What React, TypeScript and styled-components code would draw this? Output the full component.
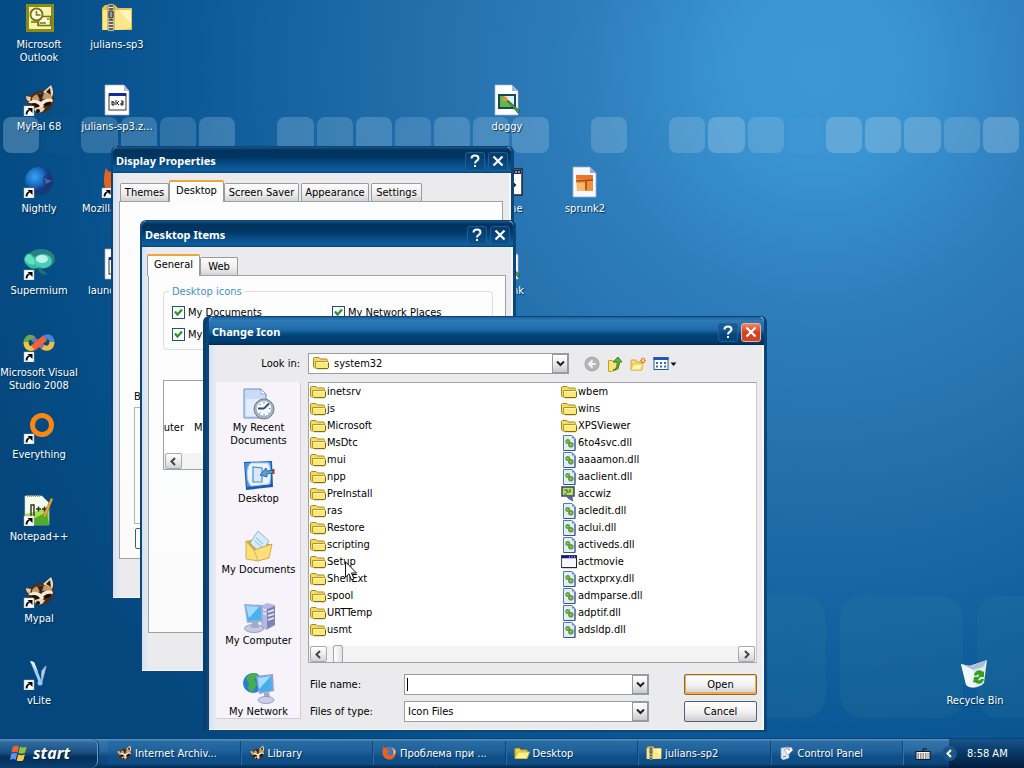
import React from 'react';
import styled, { createGlobalStyle, css } from 'styled-components';

const GlobalStyle = createGlobalStyle`
  * { box-sizing: border-box; }
  body { margin: 0; background: #05477c; }
  body, button, input, select {
    font-family: 'DejaVu Sans Condensed', 'Noto Sans', 'Liberation Sans', sans-serif;
    font-size: 11px;
    line-height: 13px;
    color: #000;
  }
  svg { display: block; flex: none; }
`;

/* ---------- screen and wallpaper ---------- */

const Screen = styled.div`
  position: relative;
  display: flex;
  flex-direction: column;
  min-height: 100vh;
  overflow: hidden;
  background: radial-gradient(ellipse 88% 120% at 80% 9%, #3c97d5 0%, #3a94d2 10%, #2f7fbd 25%, #2470ad 43%, #1664a2 58%, #0b5896 72%, #054c84 90%, #05477d 100%);
`;

const Wallpaper = styled.div`
  position: absolute;
  inset: 0;
  display: flex;
  flex-direction: column;
  justify-content: space-between;
  padding: 117px 0 50px;
`;

const SmallTiles = styled.div`
  display: grid;
  grid-template-columns: repeat(26, 1fr);
  gap: 3px;
  padding: 0 5px 0 3px;
`;

const SmallTile = styled.span<{ $tone: number }>`
  height: 36px;
  border-radius: 8px;
  background: rgba(160, 200, 225, ${(p) => p.$tone / 100});
`;

const BigTiles = styled.div`
  display: flex;
  justify-content: flex-end;
  gap: 14px;
  margin-right: -76px;
`;

const BigTile = styled.span`
  width: 123px;
  height: 122px;
  border-radius: 22px;
  background: rgba(60, 140, 150, 0.14);
`;

const tileTones = [34, 2, 27, 30, 24, 30, 0, 30, 26, 30, 24, 30, 28, 30, 0, 30, 0, 28, 38, 26, 4, 38, 38, 36, 26, 36];

const Desktop = styled.main`
  position: relative;
  flex: 1;
`;

const IconGrid = styled.div`
  position: relative;
  display: grid;
  grid-template-columns: repeat(13, 78px);
  grid-template-rows: repeat(9, 82px);
`;

const Shortcut = styled.a<{ $col: number; $row: number }>`
  grid-column: ${(p) => p.$col};
  grid-row: ${(p) => p.$row};
  display: flex;
  flex-direction: column;
  align-items: center;
  gap: 4px;
  padding-top: 2px;
  color: #fff;
  text-align: center;
  text-decoration: none;
  text-shadow: 1px 1px 1px #022a4c;
`;

/* ---------- windows ---------- */

const Window = styled.section<{ $x: number; $y: number; $w: number; $active?: boolean }>`
  position: absolute;
  left: ${(p) => p.$x}px;
  top: ${(p) => p.$y}px;
  width: ${(p) => p.$w}px;
  border: solid #0b457a;
  border-width: 1px 3px 2px 2px;
  border-radius: 6px 6px 0 0;
  background: #ebebed;
  ${(p) => p.$active && css`
    border-width: 1px 3px 2px 3px;
    box-shadow: -3px 0 0 #07406f;
  `}
`;

const TitleBar = styled.header<{ $active?: boolean }>`
  display: flex;
  align-items: center;
  gap: 3px;
  height: ${(p) => (p.$active ? 28 : 26)}px;
  padding: 2px 3px 0 3px;
  border-radius: 5px 5px 0 0;
  background: ${(p) => (p.$active
    ? 'linear-gradient(#1c5f9b, #2f7ab6 12%, #1f6ba8 45%, #004479 65%, #003a68 92%, #002a50)'
    : 'linear-gradient(#1a5488, #02335c 12%, #003764 40%, #08508c 70%, #0d5f9d 90%, #064679)')};
  color: #fff;
`;

const TitleText = styled.h2`
  flex: 1;
  margin: 0;
  font: bold 11px/14px 'Noto Sans', 'Open Sans', sans-serif;
`;

const CaptionButton = styled.button<{ $danger?: boolean }>`
  display: grid;
  place-items: center;
  width: 20px;
  height: 19px;
  padding: 0;
  border: 1px solid ${(p) => (p.$danger ? '#f0b09c' : '#1f5f97')};
  border-radius: 3px;
  background: ${(p) => (p.$danger ? 'linear-gradient(#ee8468, #d8401c 50%, #c8482c)' : 'rgba(10, 70, 125, 0.5)')};
`;

const Body = styled.div<{ $pad: string }>`
  padding: ${(p) => p.$pad};
  background: linear-gradient(90deg, #d3e2f5, #ebebed 7px);
  box-shadow: inset -2px 0 0 #f4f8fd, inset 0 -1px 0 #f4f8fd;
`;

const Tabs = styled.div`
  display: flex;
  align-items: flex-end;
  height: 21px;
`;

const Tab = styled.button<{ $w: number; $on?: boolean }>`
  width: ${(p) => p.$w}px;
  height: 18px;
  margin: 0 1px;
  padding: 0;
  border: 1px solid #9a9a9c;
  border-bottom-width: 0;
  border-radius: 2px 2px 0 0;
  background: linear-gradient(#fdfdfd, #ececec 60%, #d4d4d6);
  white-space: nowrap;
  ${(p) => p.$on && css`
    position: relative;
    height: 22px;
    margin: 0 -1px -1px;
    padding-bottom: 4px;
    border-top: 2px solid #f0a53a;
    border-bottom: 0;
    background: #fcfcfd;
  `}
`;

const Pane = styled.div<{ $h: number; $pad: string }>`
  height: ${(p) => p.$h}px;
  padding: ${(p) => p.$pad};
  border: 1px solid #9fa0a3;
  background: linear-gradient(#fdfdfe, #fafbfa);
  overflow: hidden;
`;

const BackgroundList = styled.div`
  height: 117px;
  margin-top: 4px;
  border: 1px solid #a9b4b4;
`;

const PlainButton = styled.button`
  display: block;
  width: 150px;
  height: 21px;
  margin: 4px 0 0 1px;
  border: 1px solid #3e5f6c;
  border-radius: 2px;
  background: #fff;
`;

const Group = styled.fieldset`
  display: grid;
  grid-template-columns: 160px 1fr;
  grid-auto-rows: 14px;
  align-content: start;
  gap: 8px 0;
  height: 66px;
  margin: 0;
  padding: 6px 8px 0;
  border: 1px solid #dcdcde;
  border-radius: 4px;
  legend { padding: 0 3px; margin-left: -3px; color: #4590c4; line-height: 15px; }
`;

const Check = styled.label`
  display: flex;
  align-items: center;
  gap: 3px;
  height: 14px;
  white-space: nowrap;
  input {
    appearance: none;
    width: 13px;
    height: 13px;
    margin: 0;
    border: 1px solid #1c5180;
    background: #fbfbf8;
  }
`;

const CheckBoxWrap = styled.span`
  position: relative;
  display: flex;
  svg { position: absolute; left: 2px; top: 2px; pointer-events: none; }
`;

const IconStrip = styled.div`
  display: flex;
  flex-direction: column;
  justify-content: flex-end;
  height: 90px;
  margin-top: 30px;
  border: 1px solid #9fa0a3;
  background: #fff;
  overflow: hidden;
`;

const StripLabels = styled.div`
  display: flex;
  justify-content: flex-start;
  gap: 10px;
  padding-bottom: 19px;
  white-space: nowrap;
  span:first-child { width: 20px; display: flex; justify-content: flex-end; }
`;

const ScrollTrack = styled.div`
  display: flex;
  align-items: center;
  height: 16px;
  padding: 0 1px;
  background: #f3f3f4;
`;

const ScrollArrow = styled.button`
  display: grid;
  place-items: center;
  width: 17px;
  height: 16px;
  padding: 0;
  border: 1px solid #a9a9ac;
  border-radius: 2px;
  background: linear-gradient(#fff, #e8e8ea 60%, #d2d2d5);
`;

const ScrollThumb = styled.span`
  flex: 1;
  &::before {
    content: '';
    display: block;
    width: 8px;
    height: 16px;
    margin-left: 6px;
    border: 1px solid #a4a4a8;
    border-radius: 2px;
    background: linear-gradient(90deg, #fff, #e2e2e4);
  }
`;

/* ---------- file dialog ---------- */

const Toolbar = styled.div`
  display: flex;
  align-items: center;
  height: 21px;
  margin-bottom: 8px;
`;

const LookInLabel = styled.label`
  width: 92px;
  padding-right: 8px;
  text-align: right;
`;

const ToolButtons = styled.div`
  display: flex;
  gap: 7px;
  margin-left: 15px;
`;

const ToolButton = styled.button`
  display: block;
  padding: 0;
  border: 0;
  background: none;
`;

const ComboBox = styled.span<{ $w?: number; $indent?: number }>`
  position: relative;
  display: flex;
  width: ${(p) => (p.$w ? `${p.$w}px` : '100%')};
  height: 21px;
  select, input {
    appearance: none;
    width: 100%;
    height: 21px;
    padding: 0 20px 0 ${(p) => p.$indent ?? 3}px;
    border: 1px solid #9b9ca0;
    border-radius: 0;
    outline: 0;
    background: #fff;
  }
`;

const ComboIcon = styled.span`
  position: absolute;
  left: 5px;
  top: 2px;
  pointer-events: none;
`;

const ComboArrow = styled.button`
  position: absolute;
  right: 1px;
  top: 1px;
  display: grid;
  place-items: center;
  width: 16px;
  height: 19px;
  padding: 0;
  border: 1px solid #98999c;
  background: linear-gradient(#fff, #ececee 50%, #c9cacd);
  pointer-events: none;
`;

const Caret = styled.span`
  position: absolute;
  left: 3px;
  top: 4px;
  width: 1px;
  height: 13px;
  background: #000;
`;

const DialogMain = styled.div`
  display: flex;
  align-items: flex-start;
  gap: 7px;
`;

const Places = styled.nav`
  display: flex;
  flex-direction: column;
  width: 85px;
  padding: 5px 0 0;
  border: 1px solid #e0dfe5;
  border-color: #f6f4fa #cfced6 #cfced6 #f6f4fa;
  background: #f6f4fa;
`;

const Place = styled.a`
  display: flex;
  flex-direction: column;
  align-items: center;
  gap: 1px;
  height: 71px;
  color: #000;
  text-align: center;
  text-decoration: none;
  white-space: pre-line;
  &:last-child { height: 46px; }
`;

const DialogRight = styled.div`
  flex: 1;
  display: flex;
  flex-direction: column;
  gap: 11px;
`;

const FileBox = styled.div`
  border: 1px solid #a2a3a6;
  border-right-color: #dcc3cf;
  background: #fff;
`;

const FileList = styled.ul`
  display: grid;
  grid-auto-flow: column;
  grid-template-rows: repeat(15, 17px);
  grid-template-columns: 251px 1fr;
  margin: 0;
  padding: 0 1px 8px;
  list-style: none;
`;

const FileItem = styled.li`
  display: flex;
  align-items: center;
  gap: 1px;
`;

const Form = styled.div`
  display: grid;
  grid-template-columns: 94px 1fr 73px;
  grid-auto-rows: 21px;
  row-gap: 6px;
  align-items: center;
  padding-left: 2px;
  ${ComboBox} { width: auto; margin-right: 35px; }
`;

const PushButton = styled.button<{ $primary?: boolean }>`
  height: 21px;
  padding: 0;
  border: 1px solid #51616e;
  border-radius: 2px;
  background: linear-gradient(#fff, #f0f0f1 55%, #cdced1);
  ${(p) => p.$primary && css`
    border-color: #8a6a38;
    box-shadow: inset 0 -1px 0 1px #f0ab48, inset 0 0 0 1px #fbd492;
  `}
`;

const Pointer = styled.svg`
  position: absolute;
  left: 345px;
  top: 561px;
`;

/* ---------- taskbar ---------- */

const Taskbar = styled.footer`
  position: relative;
  display: flex;
  height: 30px;
  border-top: 1px solid #0c4273;
  background: linear-gradient(#5a93c3, #3575ab 8%, #26689f 40%, #0f4c83 60%, #0b467c 85%, #03294e);
  color: #fff;
`;

const StartButton = styled.button`
  display: flex;
  align-items: center;
  gap: 4px;
  width: 98px;
  padding: 0 0 1px 10px;
  border: 0;
  border-right: 1px solid #6b9cc6;
  border-radius: 0 7px 7px 0;
  background: linear-gradient(#5c92bf, #2f6a9d 12%, #1c5184 45%, #052f58 62%, #0a3f71);
  box-shadow: 1px 0 0 #07355f;
  color: #fff;
  font: italic bold 16px/20px 'Open Sans', 'Noto Sans', sans-serif;
  text-shadow: 1px 1px 1px #02203f;
`;

const Tasks = styled.div`
  flex: 1;
  display: flex;
  padding-left: 10px;
`;

const Task = styled.button`
  flex: 1 1 0;
  display: flex;
  align-items: center;
  gap: 3px;
  margin: 2px 0 3px;
  padding: 0 8px;
  border: solid #0c467c;
  border-width: 0 1px 0 0;
  box-shadow: 1px 0 0 #3873a8;
  background: rgba(20, 90, 150, 0.35);
  color: #fff;
  white-space: nowrap;
  text-shadow: 1px 1px 0 #06305a;
`;

const Keyboard = styled.div`
  display: flex;
  align-items: center;
  width: 46px;
  padding-left: 12px;
`;

const TrayPanel = styled.div`
  display: flex;
  align-items: center;
  gap: 10px;
  width: 75px;
  background: linear-gradient(#17568d, #0d4273 30%, #062f59 65%, #021c3a);
`;

const TrayToggle = styled.button`
  display: grid;
  place-items: center;
  width: 15px;
  height: 15px;
  margin-left: -7px;
  padding: 0;
  border: 0;
  border-radius: 8px;
  background: #1d5588;
`;

/* ---------- icons ---------- */

type IconProps = { size?: number };

const ShortcutArrow = () => (
  <g>
    <rect x="1" y="22" width="10" height="10" fill="#fff" stroke="#9aa" strokeWidth=".5" />
    <path d="M3.500 30.500c0-3 1-4 3-4.500" fill="none" stroke="#000" strokeWidth="1.800" />
    <path d="M4.500 24h5v5z" fill="#000" />
  </g>
);

const Outlook = () => (
  <svg width="32" height="32" viewBox="0 0 32 32">
    <rect x="3" y="2" width="28" height="28" fill="#8b8b16" />
    <rect x="6" y="5" width="22" height="22" fill="#f6f3b0" />
    <rect x="15.500" y="14.500" width="12" height="9" fill="#fffde0" stroke="#77760c" strokeWidth="1.600" />
    <path d="M17 21h6M24 17h2" stroke="#77760c" strokeWidth="1.400" />
    <circle cx="13.500" cy="12.500" r="6" fill="#fffde0" stroke="#77760c" strokeWidth="1.800" />
    <path d="M13.500 9v4h4M8 20h7v4" stroke="#77760c" strokeWidth="1.600" fill="none" />
  </svg>
);

const ZipFolder = ({ size = 32 }: IconProps) => (
  <svg width={size} height={size} viewBox="0 0 32 32">
    <path d="M1 6l3-3h10l3 3h14v22H1z" fill="#e5c44e" />
    <path d="M2 8h28v18.500L17 28H2z" fill="#fbe88d" />
    <path d="M18 8h12v14z" fill="#fff6bf" />
    <rect x="7" y="2" width="6" height="27" fill="#e9e3c0" stroke="#6b6440" strokeWidth=".7" />
    <path d="M8 4h4M8 7h4M8 18h4M8 21h4M8 24h4M8 27h4" stroke="#333" strokeWidth="1.600" />
    <rect x="8" y="9" width="4" height="7" rx="1" fill="#999" stroke="#222" />
  </svg>
);

const Raccoon = ({ size = 32, link }: IconProps & { link?: boolean }) => (
  <svg width={size} height={size} viewBox="0 0 32 32">
    <path d="M3 12l6-1 5-4 6 0 8-6c2 5 3 9 3 14 0 8-6 14-14 14C9 29 4 22 3 12z" fill="#4a2e1c" />
    <path d="M20 8l8-7c2 4 3 8 1 12z" fill="#ead8ba" />
    <path d="M23 8l4-4 1 7z" fill="#2a1810" />
    <path d="M3 12l5 1-1 5c-3-1-4-3-4-6z" fill="#e6cba4" />
    <path d="M9 14c4-5 14-7 20-2v5c-6-4-12-2-20 1z" fill="#c39a6a" />
    <path d="M14 10l4 8 3-9z" fill="#33201a" />
    <path d="M5 19c4-4 9-4 13-1 3-3 8-5 12-2-1 4-3 5-6 4-3 0-4 3-5 6-3-5-8-7-14-7z" fill="#f8ead2" />
    <path d="M8 20c3-2 6-1 9 2-3 2-6 1-9-2zM20 21c2-3 6-4 9-3-2 4-5 5-9 3z" fill="#180d09" />
    <path d="M11 25c3-3 8-2 11-1-2 5-8 7-11 1z" fill="#e9d3b4" />
    <circle cx="15" cy="27" r="2" fill="#111" />
    {link && <ShortcutArrow />}
  </svg>
);

const ZipDoc = () => (
  <svg width="32" height="32" viewBox="0 0 32 32">
    <path d="M4 1h19l5 6v24H4z" fill="#fff" stroke="#a8a8bc" strokeWidth=".7" />
    <path d="M23 1v6h5z" fill="#b4b8dc" />
    <rect x="8" y="10" width="17" height="16" fill="#fff" stroke="#333" />
    <rect x="8" y="9" width="17" height="3" fill="#142a9c" />
    <path d="M11 17v4h2v-3h-2M15 16v5M18 17l-2 2 2 2M20 17h2v4h-2v-2h2" stroke="#111" fill="none" />
  </svg>
);

const Nightly = () => (
  <svg width="32" height="32" viewBox="0 0 32 32">
    <defs><radialGradient id="nightly" cx=".35" cy=".35"><stop offset="0" stopColor="#35a4f2" /><stop offset=".6" stopColor="#1c6fc6" /><stop offset="1" stopColor="#143a7c" /></radialGradient></defs>
    <circle cx="16" cy="15" r="14" fill="url(#nightly)" />
    <path d="M22 9c6 0 8 4 8 8-2 6-5 10-10 12 3-5 4-9 2-12-3-2-3-5 0-8z" fill="#1d356c" opacity=".6" />
    <path d="M21 12l8 3-6 3z" fill="#3c6aa8" />
    <ShortcutArrow />
  </svg>
);

const Firefox = ({ size = 32, link }: IconProps & { link?: boolean }) => (
  <svg width={size} height={size} viewBox="0 0 32 32">
    <circle cx="17" cy="16" r="13" fill="#3e76c8" />
    <path d="M20 4c5 1 9 6 9 12 0 8-6 13-12 13-8 0-14-6-14-13C3 9 4 5 5 2c1 2 2 3 3 4 4-2 7-1 8 1-4 0-5 2-4 4l5 1c-1 3-3 3-5 3 0 5 6 7 10 5 4-3 4-8 1-11z" fill="#e8641c" />
    <path d="M22 6c4 4 5 9 2 14 3-1 5-4 5-8-1-3-4-5-7-6z" fill="#ffd36a" />
    {link && <ShortcutArrow />}
  </svg>
);

const Supermium = () => (
  <svg width="32" height="32" viewBox="0 0 32 32">
    <ellipse cx="18" cy="11" rx="14" ry="10" fill="#2b7f83" />
    <path d="M1 11C3 5 7 4 10 8c4 1 8 6 7 11-4 2-8 2-11 0-3-2-5-5-5-8z" fill="#2fbf9e" />
    <path d="M2 11C3 6 7 5 9 9l6 6c-5 3-11 2-13-4z" fill="#63dfbd" />
    <ellipse cx="20" cy="13" rx="9" ry="7" fill="#49cbb5" />
    <ellipse cx="19" cy="11" rx="6" ry="4" fill="#b9f4e6" />
    <path d="M15 19c4 3 8 4 9 8-6 0-9-3-9-8z" fill="#25706e" />
    <ShortcutArrow />
  </svg>
);

const VisualStudio = () => (
  <svg width="32" height="32" viewBox="0 0 32 32">
    <path d="M11 9C6 5 3 9 3 13" stroke="#6aa84e" strokeWidth="5" fill="none" />
    <path d="M3 12c0 6 4 8 9 5" stroke="#f0c53c" strokeWidth="5" fill="none" />
    <path d="M10 9l11 9" stroke="#7f6cc0" strokeWidth="5" />
    <path d="M21 8c5-3 8 0 8 5" stroke="#4c83d0" strokeWidth="5" fill="none" />
    <path d="M29 12c0 5-4 8-9 5" stroke="#e9c23a" strokeWidth="5" fill="none" />
    <path d="M10 18L22 8" stroke="#ee6438" strokeWidth="6.500" />
    <ShortcutArrow />
  </svg>
);

const Everything = () => (
  <svg width="32" height="32" viewBox="0 0 32 32">
    <circle cx="19" cy="13" r="9.500" fill="none" stroke="#fb8614" strokeWidth="5" />
    <ShortcutArrow />
  </svg>
);

const Notepad = () => (
  <svg width="32" height="32" viewBox="0 0 32 32">
    <path d="M2 2h17l7 7v22H2z" fill="#f6fbe9" stroke="#d0d8c0" strokeWidth=".6" />
    <path d="M2 20c8-1 16-5 24-8v19H2z" fill="#a9dc58" />
    <path d="M10 25l14-7 2 13H10z" fill="#4fae28" />
    <path d="M4 2h14" stroke="#90a090" strokeWidth="2" strokeDasharray="1 1" />
    <path d="M8 22V11h3v11M13 15h5M15.500 12.500v5M19 15h5M21.500 12.500v5" stroke="#2b3020" strokeWidth="1.400" fill="none" />
    <path d="M20 22L28 4l2 1-8 19z" fill="#efab35" stroke="#8a5f18" strokeWidth=".5" />
    <ShortcutArrow />
  </svg>
);

const VLite = () => (
  <svg width="32" height="32" viewBox="0 0 32 32">
    <path d="M7 3l4 1 7 18-1 5z" fill="#a5cdf0" />
    <path d="M7 3l4 1 4 10z" fill="#e9f5ff" />
    <path d="M23 8l-5 19 1-14z" fill="#cfe6fa" stroke="#8ab4dc" strokeWidth="1.200" />
    <circle cx="17" cy="25" r="2.500" fill="#9cc4ea" />
    <ShortcutArrow />
  </svg>
);

const ImageDoc = () => (
  <svg width="32" height="32" viewBox="0 0 32 32">
    <path d="M4 1h17l6 6v24H4z" fill="#fff" stroke="#a7b6d4" strokeWidth=".7" />
    <path d="M21 1v6h6z" fill="#9db4dc" />
    <rect x="8" y="11" width="16" height="13" fill="#5fb848" stroke="#174a58" strokeWidth="2" />
    <path d="M13 12h10v10z" fill="#dff0ff" />
    <circle cx="14" cy="15" r="2.500" fill="#e89040" />
    <path d="M16 17l11 12 2-2-11-10z" fill="#4e9e48" stroke="#234f34" strokeWidth=".7" />
  </svg>
);

const PictureDoc = () => (
  <svg width="32" height="32" viewBox="0 0 32 32">
    <path d="M4 1h17l6 6v24H4z" fill="#f7f8ff" stroke="#98abd6" strokeWidth=".8" />
    <path d="M21 1v6h6z" fill="#94a8dc" />
    <path d="M7 9h17v16H8z" fill="#f0923c" />
    <path d="M8 17h8v8H8z" fill="#fbb868" />
    <path d="M7 9h17v4H7z" fill="#e87828" />
    <path d="M7 15l17-1M17 15v9" stroke="#a8481c" strokeWidth="1.600" fill="none" />
  </svg>
);

const AppDoc = () => (
  <svg width="32" height="32" viewBox="0 0 32 32">
    <rect x="2" y="3" width="29" height="26" fill="#fff" stroke="#222" strokeWidth="1.500" />
    <rect x="3" y="4" width="27" height="4" fill="#18245c" />
    <path d="M24 6h2M27 6h2" stroke="#fff" />
    <path d="M20 15l4 4-4 4" fill="none" stroke="#222" strokeWidth="2" />
  </svg>
);

const Recycle = () => (
  <svg width="32" height="32" viewBox="0 0 32 32">
    <path d="M2 6l8 2 18-6-3 23c-4 5-14 6-18 2z" fill="#dfeaf4" />
    <path d="M2 6l10 2 16-6-4 7-10 3z" fill="#a9c1da" />
    <path d="M2 6l12 6 3 17c-5 1-9 0-10-3z" fill="#f6faff" opacity=".85" />
    <path d="M15 17c1-5 6-6 9-3l1-1v6h-6l1-2c-1-1-2 0-3 1zM25 21c-1 5-6 6-9 3l-2 1 1-6 6 0-2 3c1 1 3 0 3-1z" fill="#35a01c" />
  </svg>
);

const Folder = ({ size = 16 }: IconProps) => (
  <svg width={size} height={size} viewBox="0 0 16 16">
    <path d="M.5 4c0-1 .5-1.500 1.500-1.500h4L7.500 4h5.500c1 0 1.500.5 1.500 1.500v6c0 1-.5 1.500-1.500 1.500H2.500C1.500 13 .5 12.500 .5 11.500z" fill="#f2dc66" stroke="#a8871c" />
    <path d="M2.500 6.500h11c1.500 0 2 0 2 1V12c0 1-.5 1.500-1.500 1.500H4.500C3.500 13.500 2.500 13 2.500 12z" fill="#fbe97a" stroke="#b8951f" />
    <path d="M3.500 7.500h10.500" stroke="#fff8c4" />
    <path d="M4 13.700h10c1 0 1.500-.8 1.500-1.700V8" fill="none" stroke="#7c5f10" />
  </svg>
);

const OpenFolder = () => (
  <svg width="16" height="16" viewBox="0 0 16 16">
    <path d="M1 13V3.500h4.500L7 5h6v3" fill="#f1cf4d" stroke="#c69b22" />
    <path d="M1 13.500l3-6.500h11.500l-2.500 6.500z" fill="#fff18e" stroke="#dcb93a" />
  </svg>
);

const Dll = () => (
  <svg width="16" height="16" viewBox="0 0 16 16">
    <path d="M2.500.5h8.500l3 3v12H2.500z" fill="#e3edfa" stroke="#5579b8" />
    <path d="M11 .5v3h3z" fill="#6a8cc6" />
    <path d="M14 4v11.500H3" fill="none" stroke="#34558e" />
    <circle cx="6.800" cy="6.500" r="2.500" fill="#5da838" />
    <circle cx="9.800" cy="9.800" r="2.800" fill="#6a9c34" />
    <circle cx="9.800" cy="9.800" r=".7" fill="#dde" />
    <circle cx="6.800" cy="6.500" r=".6" fill="#d6e6d0" />
  </svg>
);

const Accwiz = () => (
  <svg width="16" height="16" viewBox="0 0 16 16">
    <rect x="1" y="1" width="12" height="9" fill="#b9dc6a" stroke="#34454e" strokeWidth="1.500" />
    <path d="M3 4h3v2h3M9 3v3M3 8h3" stroke="#2e7034" strokeWidth="1.200" fill="none" />
    <path d="M6 11h5l1 4-4-2z" fill="#5a6ac0" stroke="#3a4890" strokeWidth=".6" />
  </svg>
);

const AppWindow = () => (
  <svg width="16" height="16" viewBox="0 0 16 16">
    <rect x=".5" y="1.500" width="15" height="12" fill="#f6f6fc" stroke="#44445c" />
    <path d="M1 3h14" stroke="#16168c" strokeWidth="2.500" />
    <path d="M8 3h1M10.500 3h1M13 3h1" stroke="#fff" />
    <path d="M1 13.700h15M15.500 2v12" stroke="#222" />
  </svg>
);

const RecentDocs = () => (
  <svg width="32" height="32" viewBox="0 0 32 32">
    <path d="M1 1h17l5 5v24H1z" fill="#c9dcf5" stroke="#6d90c2" />
    <path d="M3 11h16v17H3z" fill="#eef5ff" opacity=".7" />
    <path d="M18 1v5h5z" fill="#fff" stroke="#6d90c2" strokeWidth=".7" />
    <circle cx="21" cy="21" r="10" fill="#aab7c4" stroke="#6c7885" />
    <circle cx="21" cy="20.500" r="7.800" fill="#f7fbff" stroke="#8493a4" strokeWidth=".6" />
    <path d="M21 20.500l5-5M21 20.500h-6" stroke="#23537c" strokeWidth="1.800" />
    <path d="M21 14v1.500M21 26v1.500M27.500 20.500H26M16.500 16l1 1M26 25.500l-1-1M16.500 25.500l1-1" stroke="#5d7186" />
  </svg>
);

const DesktopPlace = () => (
  <svg width="32" height="32" viewBox="0 0 32 32">
    <path d="M1 3l28-1 1 26L3 31z" fill="#1d5cac" />
    <path d="M2 4l26-1v22L4 28z" fill="#4b96e0" />
    <path d="M8 4h17c3 4 3 17 1 21L8 27C3 22 3 8 8 4z" fill="#eaf4ff" stroke="#b4d2f2" />
    <path d="M10 8l9 1v14H10z" fill="#d8e9fc" stroke="#4f8bcc" strokeWidth="1.200" />
    <path d="M30 11l-6 1-1-3-6 7 7 2v-3l6-1z" fill="#55a0d8" stroke="#205488" strokeWidth=".8" />
    <path d="M30.500 10v5" stroke="#a03c2c" strokeWidth="2" />
  </svg>
);

const DocumentsPlace = () => (
  <svg width="32" height="32" viewBox="0 0 32 32">
    <path d="M3 11l9-2 17 6-4 13-10 3L3 27z" fill="#dcae38" />
    <path d="M15 1l11 10-8 13L7 13z" fill="#d3ebfa" stroke="#7ba7ca" strokeWidth=".8" />
    <path d="M13 8l7 6M12 11l7 6" stroke="#8fb9dc" />
    <path d="M3 11l8 9 18-6-3 14-11 3L3 29z" fill="#fbdf79" stroke="#c3942b" strokeWidth=".7" />
    <path d="M11 20l4 11" stroke="#ddb04a" />
  </svg>
);

const ComputerPlace = () => (
  <svg width="32" height="32" viewBox="0 0 32 32">
    <path d="M18 5l6-3 8 2v20l-8 5-6-2z" fill="#b5b8e2" />
    <path d="M24 8l8-3v19l-8 4z" fill="#7f83ba" />
    <path d="M25 11l6-2M25 15l6-2M25 19l6-2M19 8l4 1M19 12l4 1" stroke="#eceeff" strokeWidth="1.400" />
    <path d="M1 3l19 1v17L4 22z" fill="#9cadd8" />
    <path d="M3 5l15 1v13L5 20z" fill="#48b2ef" />
    <path d="M3 5l13 1-10 11z" fill="#a0ddfb" />
    <ellipse cx="11" cy="27.500" rx="9.500" ry="4" fill="#c5cbe5" stroke="#7d85ac" strokeWidth=".7" />
    <path d="M9 21h6l1 6H8z" fill="#a2aace" />
  </svg>
);

const NetworkPlace = () => (
  <svg width="32" height="32" viewBox="0 0 32 32">
    <circle cx="10" cy="11" r="10" fill="#2a7cd4" />
    <path d="M3 6c4-5 9-6 12-4l-4 6 3 4-4 8C5 19 4 15 6 12z" fill="#43b04a" />
    <path d="M13 4l17-2 1 17-15 3z" fill="#8ea3d4" />
    <path d="M15 6l13-2 1 14-12 2z" fill="#45afee" />
    <path d="M15 6l13-2-12 13z" fill="#a4defb" />
    <path d="M21 21l5-1 1 6h-6z" fill="#a2aace" />
    <ellipse cx="23" cy="28" rx="8" ry="3.500" fill="#c9cfe8" stroke="#7d85ac" strokeWidth=".7" />
  </svg>
);

const BackIcon = () => (
  <svg width="16" height="16" viewBox="0 0 16 16">
    <circle cx="8" cy="8" r="7" fill="#b3b5b8" stroke="#a0a2a6" />
    <path d="M8.500 4.500L5 8l3.500 3.500M5 8h6.500" stroke="#f4f4f4" strokeWidth="2" fill="none" />
  </svg>
);

const UpIcon = () => (
  <svg width="16" height="16" viewBox="0 0 16 16">
    <path d="M1.500 4.500h4l1 1.500h5v7l-7 2.500h-3z" fill="#f8e27a" stroke="#c49c2a" />
    <path d="M6 14c4-1 4-4 4-8H6l5-5 4 5h-2.500c0 5-2 8-6.500 8z" fill="#57b534" stroke="#2c6e1c" strokeWidth=".8" />
  </svg>
);

const NewIcon = () => (
  <svg width="16" height="16" viewBox="0 0 16 16">
    <path d="M1 14V4h5l1 2h5v8z" fill="#f5dc6c" stroke="#d2a936" />
    <path d="M1 14l2-6h10l-2 6z" fill="#fff3a6" stroke="#d8b544" strokeWidth=".7" />
    <path d="M13 1.500v6M10 4.500h6M11 2.500l4 4M15 2.500l-4 4" stroke="#ec7c34" strokeWidth="1.200" />
    <circle cx="13" cy="4.500" r="1.300" fill="#ffe9a0" />
  </svg>
);

const ViewsIcon = () => (
  <svg width="24" height="16" viewBox="0 0 24 16">
    <rect x="1" y="1.500" width="14" height="12" fill="#fff" stroke="#1b59b4" />
    <path d="M.5 2.500h15" stroke="#1b59b4" strokeWidth="3" />
    <path d="M3 7h2M7 7h2M11 7h2M3 10.500h2M7 10.500h2M11 10.500h2" stroke="#3c68a4" strokeWidth="2" />
    <path d="M17.500 6.500h6l-3 3.500z" fill="#111" />
  </svg>
);

const KeyboardIcon = () => (
  <svg width="16" height="16" viewBox="0 0 16 16">
    <path d="M8 5V3h4" fill="none" stroke="#111" />
    <rect x="1" y="5.500" width="14" height="8" fill="#f2f2f2" stroke="#171717" />
    <path d="M2.500 8h11M2.500 10h11M2.500 12h11" stroke="#333" strokeDasharray="1.500 1" />
  </svg>
);

const ControlIcon = () => (
  <svg width="16" height="16" viewBox="0 0 16 16">
    <path d="M2 3l8-1v11l-6 2-2-2z" fill="#dcebfa" stroke="#7ea6d0" strokeWidth=".7" />
    <path d="M5 5l7-3 2 3-5 5z" fill="#fff" stroke="#8c98a8" strokeWidth=".7" />
    <path d="M9 4l2 1M4 12l3-1" stroke="#c65c2c" />
  </svg>
);

const Flag = () => (
  <svg width="19" height="19" viewBox="0 0 20 20">
    <path d="M3 3c2-1.500 4-1.500 6.500-.5L8 9C6 8 4 8 1.500 9z" fill="#f2622e" />
    <path d="M10.500 3c2 1 4.500 1 7-.5L16 9c-2 1.500-5 1.500-7 .5z" fill="#8fc53c" />
    <path d="M1.200 10.500c2-1.300 4.500-1.200 6.500-.5L6 16.500c-2-1-4-1-6 .3z" fill="#5d93ec" />
    <path d="M8.700 11c2 1 4.500 1 7-.3L14 17c-2 1.300-5 1.300-7 .3z" fill="#fbcb3c" />
  </svg>
);

const Chevron = ({ dir }: { dir: 'left' | 'right' | 'down' }) => (
  <svg width="9" height="9" viewBox="0 0 9 9">
    <path
      d={dir === 'left' ? 'M6 1L2.500 4.500 6 8' : dir === 'right' ? 'M3 1l3.500 3.500L3 8' : 'M1 2.500L4.500 6 8 2.500'}
      fill="none"
      stroke={dir === 'down' ? '#222' : '#444'}
      strokeWidth="2"
    />
  </svg>
);

const HelpGlyph = () => (
  <svg width="12" height="14" viewBox="0 0 12 14">
    <path d="M2.500 4.500C2.500 2 4 1.500 6 1.500s3.500 1 3.500 3S6 6.800 6 9.500M6 11v2" stroke="#fff" strokeWidth="2" fill="none" />
  </svg>
);

const CloseGlyph = () => (
  <svg width="12" height="12" viewBox="0 0 12 12">
    <path d="M1.500 1.500l9 9M10.500 1.500l-9 9" stroke="#fff" strokeWidth="2.200" />
  </svg>
);

const Tick = () => (
  <svg width="9" height="9" viewBox="0 0 9 9">
    <path d="M1 3.500L3.500 6.500 8 1.500" stroke="#2c9030" strokeWidth="2.200" fill="none" />
  </svg>
);

/* ---------- data ---------- */

const shortcuts: [number, number, string, React.ReactNode][] = [
  [1, 1, 'Microsoft Outlook', <Outlook />],
  [1, 2, 'MyPal 68', <Raccoon link />],
  [1, 3, 'Nightly', <Nightly />],
  [1, 4, 'Supermium', <Supermium />],
  [1, 5, 'Microsoft Visual Studio 2008', <VisualStudio />],
  [1, 6, 'Everything', <Everything />],
  [1, 7, 'Notepad++', <Notepad />],
  [1, 8, 'Mypal', <Raccoon link />],
  [1, 9, 'vLite', <VLite />],
  [2, 1, 'julians-sp3', <ZipFolder />],
  [2, 2, 'julians-sp3.z...', <ZipDoc />],
  [2, 3, 'Mozilla Firefox', <Firefox link />],
  [2, 4, 'launcher.jar', <ZipDoc />],
  [7, 2, 'doggy', <ImageDoc />],
  [7, 3, 'phone', <AppDoc />],
  [7, 4, 'shrunk', <ImageDoc />],
  [8, 3, 'sprunk2', <PictureDoc />],
  [13, 9, 'Recycle Bin', <Recycle />],
];

const folders = ['inetsrv', 'js', 'Microsoft', 'MsDtc', 'mui', 'npp', 'PreInstall', 'ras', 'Restore', 'scripting', 'Setup', 'ShellExt', 'spool', 'URTTemp', 'usmt', 'wbem', 'wins', 'XPSViewer'];
const files = ['6to4svc.dll', 'aaaamon.dll', 'aaclient.dll', 'accwiz', 'acledit.dll', 'aclui.dll', 'activeds.dll', 'actmovie', 'actxprxy.dll', 'admparse.dll', 'adptif.dll', 'adsldp.dll'];

const places: [string, React.ReactNode][] = [
  ['My Recent\nDocuments', <RecentDocs />],
  ['Desktop', <DesktopPlace />],
  ['My Documents', <DocumentsPlace />],
  ['My Computer', <ComputerPlace />],
  ['My Network', <NetworkPlace />],
];

const tasks: [string, React.ReactNode][] = [
  ['Internet Archiv...', <Raccoon size={16} />],
  ['Library', <Raccoon size={16} />],
  ['Проблема при ...', <Firefox size={16} />],
  ['Desktop', <OpenFolder />],
  ['julians-sp2', <ZipFolder size={16} />],
  ['Control Panel', <ControlIcon />],
];

const fileIcon = (name: string) => {
  if (name === 'accwiz') return <Accwiz />;
  if (name === 'actmovie') return <AppWindow />;
  return <Dll />;
};

/* ---------- composition ---------- */

const Caption = ({ title, active }: { title: string; active?: boolean }) => (
  <TitleBar $active={active}>
    <TitleText>{title}</TitleText>
    <CaptionButton aria-label="Help"><HelpGlyph /></CaptionButton>
    <CaptionButton aria-label="Close" $danger={active}><CloseGlyph /></CaptionButton>
  </TitleBar>
);

const Option = ({ label }: { label: string }) => (
  <Check>
    <CheckBoxWrap><input type="checkbox" defaultChecked /><Tick /></CheckBoxWrap>
    {label}
  </Check>
);

const DisplayProperties = () => (
  <Window $x={111} $y={146} $w={403}>
    <Caption title="Display Properties" />
    <Body $pad="7px 8px 39px 6px">
      <Tabs>
        <Tab $w={49}>Themes</Tab>
        <Tab $w={55} $on>Desktop</Tab>
        <Tab $w={75}>Screen Saver</Tab>
        <Tab $w={68}>Appearance</Tab>
        <Tab $w={51}>Settings</Tab>
      </Tabs>
      <Pane $h={358} $pad="188px 14px 0">
        <span>Background:</span>
        <BackgroundList />
        <PlainButton>Customize Desktop...</PlainButton>
      </Pane>
    </Body>
  </Window>
);

const DesktopItems = () => (
  <Window $x={140} $y={220} $w={376}>
    <Caption title="Desktop Items" />
    <Body $pad="7px 7px 38px 6px">
      <Tabs>
        <Tab $w={53} $on>General</Tab>
        <Tab $w={38}>Web</Tab>
      </Tabs>
      <Pane $h={358} $pad="8px 12px 0 14px">
        <Group>
          <legend>Desktop icons</legend>
          <Option label="My Documents" />
          <Option label="My Network Places" />
          <Option label="My Computer" />
          <Option label="Internet Explorer" />
        </Group>
        <IconStrip>
          <StripLabels><span>My Computer</span><span>My Documents</span></StripLabels>
          <ScrollTrack>
            <ScrollArrow aria-label="Scroll left"><Chevron dir="left" /></ScrollArrow>
          </ScrollTrack>
        </IconStrip>
      </Pane>
    </Body>
  </Window>
);

const ChangeIcon = () => (
  <Window $x={206} $y={316} $w={561} $active>
    <Caption title="Change Icon" active />
    <Body $pad="8px 7px 8px">
      <Toolbar>
        <LookInLabel htmlFor="look-in">Look in:</LookInLabel>
        <ComboBox $w={261} $indent={25}>
          <select id="look-in"><option>system32</option></select>
          <ComboIcon><Folder /></ComboIcon>
          <ComboArrow tabIndex={-1} aria-label="Open list"><Chevron dir="down" /></ComboArrow>
        </ComboBox>
        <ToolButtons>
          <ToolButton aria-label="Back"><BackIcon /></ToolButton>
          <ToolButton aria-label="Up one level"><UpIcon /></ToolButton>
          <ToolButton aria-label="New folder"><NewIcon /></ToolButton>
          <ToolButton aria-label="Views"><ViewsIcon /></ToolButton>
        </ToolButtons>
      </Toolbar>
      <DialogMain>
        <Places>
          {places.map(([label, icon]) => <Place key={label} href="#">{icon}{label}</Place>)}
        </Places>
        <DialogRight>
          <FileBox>
            <FileList>
              {folders.map((name) => <FileItem key={name}><Folder />{name}</FileItem>)}
              {files.map((name) => <FileItem key={name}>{fileIcon(name)}{name}</FileItem>)}
            </FileList>
            <ScrollTrack>
              <ScrollArrow aria-label="Scroll left"><Chevron dir="left" /></ScrollArrow>
              <ScrollThumb />
              <ScrollArrow aria-label="Scroll right"><Chevron dir="right" /></ScrollArrow>
            </ScrollTrack>
          </FileBox>
          <Form>
            <label htmlFor="file-name">File name:</label>
            <ComboBox>
              <input id="file-name" type="text" />
              <Caret />
              <ComboArrow tabIndex={-1} aria-label="Open list"><Chevron dir="down" /></ComboArrow>
            </ComboBox>
            <PushButton $primary>Open</PushButton>
            <label htmlFor="file-type">Files of type:</label>
            <ComboBox>
              <select id="file-type"><option>Icon Files</option></select>
              <ComboArrow tabIndex={-1} aria-label="Open list"><Chevron dir="down" /></ComboArrow>
            </ComboBox>
            <PushButton>Cancel</PushButton>
          </Form>
        </DialogRight>
      </DialogMain>
    </Body>
  </Window>
);

export default function App() {
  return (
    <>
      <GlobalStyle />
      <Screen>
        <Wallpaper>
          <SmallTiles>{tileTones.map((tone, i) => <SmallTile key={i} $tone={tone} />)}</SmallTiles>
          <BigTiles><BigTile /><BigTile /><BigTile /></BigTiles>
        </Wallpaper>
        <Desktop>
          <IconGrid>
            {shortcuts.map(([col, row, label, icon]) => (
              <Shortcut key={label} href="#" $col={col} $row={row}>{icon}{label}</Shortcut>
            ))}
          </IconGrid>
          <DisplayProperties />
          <DesktopItems />
          <ChangeIcon />
          <Pointer width="12" height="20" viewBox="0 0 12 20">
            <path d="M.5.8v15.400l3.500-3.300 2.500 6 2.500-1-2.500-5.900h5z" fill="#fff" stroke="#111" />
          </Pointer>
        </Desktop>
        <Taskbar>
          <StartButton><Flag />start</StartButton>
          <Tasks>
            {tasks.map(([label, icon]) => <Task key={label}>{icon}{label}</Task>)}
          </Tasks>
          <Keyboard><KeyboardIcon /></Keyboard>
          <TrayPanel>
            <TrayToggle aria-label="Show hidden icons">
              <svg width="9" height="9" viewBox="0 0 9 9"><path d="M6 1L2.500 4.500 6 8" fill="none" stroke="#fff" strokeWidth="2" /></svg>
            </TrayToggle>
            <time>8:58 AM</time>
          </TrayPanel>
        </Taskbar>
      </Screen>
    </>
  );
}
